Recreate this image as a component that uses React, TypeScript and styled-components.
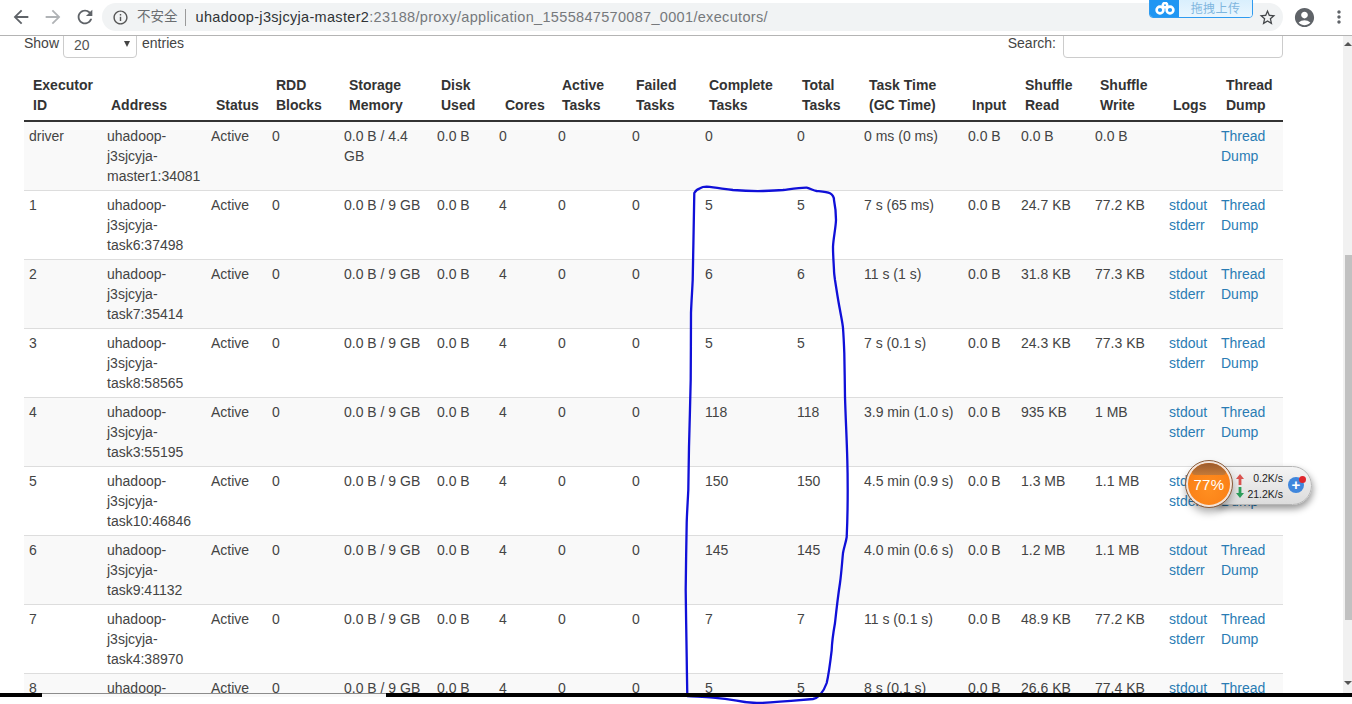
import React from "react";
import styled, { createGlobalStyle } from "styled-components";
import {
  MdArrowBack,
  MdArrowForward,
  MdRefresh,
  MdInfoOutline,
  MdStarBorder,
  MdAccountCircle,
  MdMoreVert,
} from "react-icons/md";

const Global = createGlobalStyle`
  html, body { margin: 0; padding: 0; height: 100%; background: #fff; overflow: hidden; }
  #root { height: 100%; }
  * { box-sizing: border-box; }
`;

const Page = styled.div`
  position: relative;
  width: 1352px;
  height: 704px;
  overflow: hidden;
  display: flex;
  flex-direction: column;
  font-family: "Liberation Sans", Arial, sans-serif;
  font-size: 14px;
  line-height: 20px;
  color: #333;
`;

const BrowserBar = styled.div`
  height: 36px;
  flex: none;
  display: flex;
  align-items: center;
  background: #fff;
  border-bottom: 1px solid #b4b4b4;
  padding: 0 0 1px 5px;
  position: relative;
  z-index: 2;
`;

const NavButton = styled.span<{ $dim?: boolean }>`
  width: 32px;
  display: flex;
  justify-content: center;
  color: ${(p) => (p.$dim ? "#b0b3b6" : "#5f6368")};
  font-size: 22px;
`;

const Omnibox = styled.div`
  margin-left: 1px;
  width: 1181px;
  height: 28px;
  border-radius: 14px;
  background: #f1f3f4;
  display: flex;
  align-items: center;
  padding-left: 10px;
  color: #5f6368;
`;

const InfoIcon = styled(MdInfoOutline)`
  font-size: 17px;
  flex: none;
  color: #555;
`;

const Insecure = styled.span`
  margin-left: 8px;
  font-family: "Liberation Sans", "Noto Sans CJK SC", sans-serif;
  font-size: 13.5px;
  color: #6a6d70;
`;

const Divider = styled.span`
  width: 1px;
  height: 17px;
  margin: 0 10px 0 7px;
  background: #9a9a9a;
`;

const UrlHost = styled.span`
  font-size: 14.5px;
  letter-spacing: 0.32px;
  color: #303336;
  white-space: nowrap;
`;

const UrlRest = styled(UrlHost)`
  color: #76797c;
`;

const Star = styled(MdStarBorder)`
  margin-left: auto;
  margin-right: 6px;
  font-size: 19px;
  color: #44474a;
`;

const RightIcons = styled.div`
  display: flex;
  align-items: center;
  margin-left: 10px;
  color: #5f6368;
`;

const AccountIcon = styled(MdAccountCircle)`
  font-size: 23px;
`;

const MoreIcon = styled(MdMoreVert)`
  font-size: 20px;
  margin-left: 13px;
`;

const UploadBadge = styled.div`
  position: absolute;
  left: 1149px;
  top: -1px;
  width: 104px;
  height: 19px;
  display: flex;
  border: 1px solid #2f9bf0;
  border-radius: 0 0 4px 4px;
  overflow: hidden;
`;

const UploadLogo = styled.div`
  width: 29px;
  background: #1f96f3;
  display: flex;
  align-items: center;
  justify-content: center;
`;

const UploadText = styled.div`
  flex: 1;
  background: linear-gradient(#d9effd, #eaf6fe);
  color: #7fb6de;
  font-family: "Noto Sans CJK SC", sans-serif;
  font-size: 12px;
  line-height: 15px;
  text-align: center;
  letter-spacing: 0.4px;
`;

const Main = styled.div`
  flex: 1;
  display: flex;
  min-height: 0;
  overflow: hidden;
`;

const Content = styled.div`
  width: 1343px;
  flex: none;
  padding-left: 24px;
  margin-top: -12px;
`;

const Controls = styled.div`
  width: 1259px;
  height: 34px;
  display: flex;
  justify-content: space-between;
  margin-bottom: 12px;
`;

const ControlLabel = styled.label<{ $gap: number }>`
  display: flex;
  align-items: flex-start;
  padding-top: 9px;
  gap: ${(p) => p.$gap}px;
  color: #444;
`;

const LengthSelect = styled.div`
  width: 74px;
  height: 34px;
  margin: -9px 1px 0 0;
  border: 1px solid #ccc;
  border-radius: 4px;
  background: #fff;
  padding: 10px 0 0 10px;
  color: #555;
  display: flex;
  justify-content: space-between;
`;

const SelectArrow = styled.span`
  width: 0;
  height: 0;
  margin: 6px 6px 0 0;
  border-left: 3.5px solid transparent;
  border-right: 3.5px solid transparent;
  border-top: 6px solid #444;
`;

const SearchInput = styled.input`
  width: 220px;
  height: 34px;
  margin-top: -9px;
  border: 1px solid #ccc;
  border-radius: 4px;
  background: #fff;
`;

const Table = styled.table`
  table-layout: fixed;
  width: 1259px;
  border-collapse: separate;
  border-spacing: 0;
`;

const Col = styled.col<{ $w: number }>`
  width: ${(p) => p.$w}px;
`;

const Head = styled.th<{ $pad: number }>`
  padding: 5px 0 5px ${(p) => p.$pad}px;
  height: 52px;
  text-align: left;
  vertical-align: bottom;
  font-weight: 700;
  color: #333;
  border-bottom: 2px solid #333;
`;

const Row = styled.tr<{ $striped: boolean }>`
  background: ${(p) => (p.$striped ? "#f9f9f9" : "#fff")};
`;

const Cell = styled.td<{ $first: boolean }>`
  padding: 4px 5px;
  vertical-align: top;
  overflow-wrap: break-word;
  color: #444;
  border-top: ${(p) => (p.$first ? "0" : "1px solid #ddd")};
`;

const Link = styled.a`
  color: #2a7cb4;
  text-decoration: none;
  display: block;
`;

const Scrollbar = styled.div`
  flex: 1;
  background: #f1f1f1;
  display: flex;
  flex-direction: column;
  align-items: flex-end;
  padding-top: 6px;
`;

const ScrollUp = styled.span`
  width: 0;
  height: 0;
  border-left: 4px solid transparent;
  border-right: 4px solid transparent;
  border-bottom: 4px solid #555;
`;

const ScrollDown = styled.span`
  width: 0;
  height: 0;
  margin-top: 61px;
  border-left: 4px solid transparent;
  border-right: 4px solid transparent;
  border-top: 4px solid #555;
`;

const ScrollThumb = styled.div`
  width: 7px;
  height: 365px;
  margin-top: 209px;
  background: #c1c1c1;
`;

const Ink = styled.svg`
  position: absolute;
  left: 0;
  top: 0;
  pointer-events: none;
  z-index: 3;
`;

const BottomStrip = styled.div`
  position: absolute;
  left: 0;
  right: 0;
  top: 693px;
  height: 4px;
  display: flex;
  align-items: flex-start;
  z-index: 4;
`;

const BlackBar = styled.div<{ $grow?: boolean }>`
  height: 4px;
  background: #000;
  ${(p) => (p.$grow ? "flex: 1;" : "width: 42px;")}
`;

const GreyLine = styled.div`
  width: 344px;
  height: 1px;
  background: #8c8c8c;
`;

const BottomBlank = styled.div`
  position: absolute;
  left: 0;
  right: 0;
  top: 697px;
  height: 7px;
  background: #fff;
  z-index: 2;
`;

const Widget = styled.div`
  position: absolute;
  left: 1184px;
  top: 461px;
  width: 128px;
  height: 48px;
  z-index: 5;
`;

const WidgetPill = styled.div`
  position: absolute;
  left: 32px;
  top: 5px;
  width: 96px;
  height: 39px;
  border-radius: 0 20px 20px 0;
  border: 1px solid #b5b5b5;
  background: linear-gradient(#f4f4f4, #dcdcdc);
  box-shadow: 1px 4px 7px rgba(0, 0, 0, 0.4);
`;

const WidgetBall = styled.div`
  position: absolute;
  left: 2px;
  top: 0;
  width: 46px;
  height: 46px;
  border-radius: 50%;
  border: 2px solid #f3e4da;
  outline: 1px solid #8a5a38;
  background: radial-gradient(circle at 50% 62%, #ff8f20 0, #fb8218 60%, #ee7410 100%);
  box-shadow: 0 5px 8px rgba(0, 0, 0, 0.35);
  color: #fff;
  font-size: 15px;
  line-height: 44px;
  text-align: center;
  letter-spacing: 0.4px;
  overflow: hidden;
`;

const BallCap = styled.div`
  position: absolute;
  left: 4px;
  right: 4px;
  top: 0;
  height: 12px;
  border-radius: 18px 18px 6px 6px;
  background: linear-gradient(#9c5a2c, #c47a38);
`;

const Speed = styled.div<{ $top: number }>`
  position: absolute;
  right: 29px;
  top: ${(p) => p.$top}px;
  width: 44px;
  text-align: right;
  font-size: 10.5px;
  line-height: 12px;
  color: #222;
`;

const SpeedArrow = styled.svg<{ $top: number }>`
  position: absolute;
  left: 52px;
  top: ${(p) => p.$top}px;
`;

const PlusBall = styled.div`
  position: absolute;
  left: 104px;
  top: 16px;
  width: 16px;
  height: 16px;
  border-radius: 50%;
  background: #3f86dc;
  color: #fff;
  font-size: 15px;
  font-weight: 700;
  line-height: 16px;
  text-align: center;
`;

const RedDot = styled.div`
  position: absolute;
  left: 115px;
  top: 15px;
  width: 7px;
  height: 7px;
  border-radius: 50%;
  background: #e0262c;
`;

const cols = [78, 104, 61, 72, 93, 62, 59, 74, 73, 92, 67, 104, 53, 74, 74, 52, 67];

const heads: [string[], number][] = [
  [["Executor", "ID"], 9],
  [["Address"], 9],
  [["Status"], 10],
  [["RDD", "Blocks"], 9],
  [["Storage", "Memory"], 10],
  [["Disk", "Used"], 9],
  [["Cores"], 11],
  [["Active", "Tasks"], 9],
  [["Failed", "Tasks"], 9],
  [["Complete", "Tasks"], 9],
  [["Total", "Tasks"], 10],
  [["Task Time", "(GC Time)"], 10],
  [["Input"], 9],
  [["Shuffle", "Read"], 9],
  [["Shuffle", "Write"], 10],
  [["Logs"], 9],
  [["Thread", "Dump"], 10],
];

interface Executor {
  id: string;
  addr: string;
  storage: string;
  cores: string;
  complete: string;
  total: string;
  time: string;
  read: string;
  write: string;
}

const mk = (
  id: string,
  addr: string,
  storage: string,
  cores: string,
  complete: string,
  time: string,
  read: string,
  write: string
): Executor => ({ id, addr, storage, cores, complete, total: complete, time, read, write });

const rows: Executor[] = [
  mk("driver", "master1:34081", "0.0 B / 4.4 GB", "0", "0", "0 ms (0 ms)", "0.0 B", "0.0 B"),
  mk("1", "task6:37498", "0.0 B / 9 GB", "4", "5", "7 s (65 ms)", "24.7 KB", "77.2 KB"),
  mk("2", "task7:35414", "0.0 B / 9 GB", "4", "6", "11 s (1 s)", "31.8 KB", "77.3 KB"),
  mk("3", "task8:58565", "0.0 B / 9 GB", "4", "5", "7 s (0.1 s)", "24.3 KB", "77.3 KB"),
  mk("4", "task3:55195", "0.0 B / 9 GB", "4", "118", "3.9 min (1.0 s)", "935 KB", "1 MB"),
  mk("5", "task10:46846", "0.0 B / 9 GB", "4", "150", "4.5 min (0.9 s)", "1.3 MB", "1.1 MB"),
  mk("6", "task9:41132", "0.0 B / 9 GB", "4", "145", "4.0 min (0.6 s)", "1.2 MB", "1.1 MB"),
  mk("7", "task4:38970", "0.0 B / 9 GB", "4", "7", "11 s (0.1 s)", "48.9 KB", "77.2 KB"),
  mk("8", "task5:40210", "0.0 B / 9 GB", "4", "5", "8 s (0.1 s)", "26.6 KB", "77.4 KB"),
];

const inkPath =
  "M694.3 193 C696 190 698 188.8 700 188.3 C702 187 704 186.7 706.7 186.7 C716 187.5 724 189 733 190 C743 190.8 753 191.2 763 191 C770 190.8 776 190.6 783 190 C791 189 799 187.6 806.7 187.7 C811 188.6 813 190.4 816.7 191 C822 191.6 827 192 830 193.3 C833 195 834 197 834 200 C835.4 207 836 213 836 220 C835.6 229 833.4 238 833 246.7 C833 255 833.6 262 834 270 C834 273 834.6 277 835 280 C836.6 290 838 300 840 310 C841 316 842.4 322 843 328 C843.6 336 844 345 844.3 353 C844.6 368 844.8 382 845 397 C845.6 418 846.8 439 847.3 460 C847.6 470 847.7 480 847.7 490 C847.7 505 847.4 522 846.7 537 C845.8 543 844 547 843 553 C842 563 841.4 573 840 583 C838 596 836.4 610 835 623 C833.4 632 832 641 831.7 650 C830.4 661 829 673 826.7 683 C825 688 822.6 692 820 695 C818 697 815.6 698.6 813 699 C802 700 791 700.8 780 701.7 C772 702.4 764 703 756.7 703 C750 702.8 743 702 736.7 700.7 C729 699.4 721 698.4 713 697.7 C704 697 696 696.6 687.3 696 C687 683 686.9 670 686.7 657 C686.3 635 686 612 685.7 590 C685.9 568 686.3 545 686.7 523 C687 512 687.8 501 688.3 490 C688.6 475 688.8 461 689 447 C689.6 425 690.2 402 690.7 380 C690.9 358 690.9 335 691 313 C691.4 302 692.2 291 692.7 280 C693.2 251 693.9 222 694.3 193 Z";

export default function App() {
  return (
    <Page>
      <Global />
      <BrowserBar>
        <NavButton><MdArrowBack /></NavButton>
        <NavButton $dim><MdArrowForward /></NavButton>
        <NavButton><MdRefresh /></NavButton>
        <Omnibox>
          <InfoIcon />
          <Insecure>不安全</Insecure>
          <Divider />
          <UrlHost>uhadoop-j3sjcyja-master2</UrlHost>
          <UrlRest>:23188/proxy/application_1555847570087_0001/executors/</UrlRest>
          <Star />
        </Omnibox>
        <RightIcons>
          <AccountIcon />
          <MoreIcon />
        </RightIcons>
        <UploadBadge>
          <UploadLogo>
            <svg width="20" height="13" viewBox="0 0 20 13" fill="none" stroke="#fff" strokeWidth="2.6">
              <circle cx="5" cy="8" r="3.4" />
              <circle cx="15" cy="8" r="3.4" />
              <circle cx="10" cy="3.2" r="2.2" />
            </svg>
          </UploadLogo>
          <UploadText>拖拽上传</UploadText>
        </UploadBadge>
      </BrowserBar>
      <Main>
        <Content>
          <Controls>
            <ControlLabel $gap={4}>
              Show
              <LengthSelect>
                20
                <SelectArrow />
              </LengthSelect>
              entries
            </ControlLabel>
            <ControlLabel $gap={7}>
              Search:
              <SearchInput type="text" />
            </ControlLabel>
          </Controls>
          <Table>
            <colgroup>
              {cols.map((w, i) => (
                <Col key={i} $w={w} />
              ))}
            </colgroup>
            <thead>
              <tr>
                {heads.map(([lines, pad], i) => (
                  <Head key={i} $pad={pad}>
                    {lines.map((l, j) => (
                      <React.Fragment key={j}>
                        {j > 0 && <br />}
                        {l}
                      </React.Fragment>
                    ))}
                  </Head>
                ))}
              </tr>
            </thead>
            <tbody>
              {rows.map((r, i) => {
                const first = i === 0;
                return (
                  <Row key={r.id} $striped={i % 2 === 0}>
                    <Cell $first={first}>{r.id}</Cell>
                    <Cell $first={first}>
                      uhadoop-<br />j3sjcyja-<br />{r.addr}
                    </Cell>
                    <Cell $first={first}>Active</Cell>
                    <Cell $first={first}>0</Cell>
                    <Cell $first={first}>{r.storage}</Cell>
                    <Cell $first={first}>0.0 B</Cell>
                    <Cell $first={first}>{r.cores}</Cell>
                    <Cell $first={first}>0</Cell>
                    <Cell $first={first}>0</Cell>
                    <Cell $first={first}>{r.complete}</Cell>
                    <Cell $first={first}>{r.total}</Cell>
                    <Cell $first={first}>{r.time}</Cell>
                    <Cell $first={first}>0.0 B</Cell>
                    <Cell $first={first}>{r.read}</Cell>
                    <Cell $first={first}>{r.write}</Cell>
                    <Cell $first={first}>
                      {!first && (
                        <>
                          <Link>stdout</Link>
                          <Link>stderr</Link>
                        </>
                      )}
                    </Cell>
                    <Cell $first={first}>
                      <Link>Thread<br />Dump</Link>
                    </Cell>
                  </Row>
                );
              })}
            </tbody>
          </Table>
        </Content>
        <Scrollbar>
          <ScrollUp />
          <ScrollThumb />
          <ScrollDown />
        </Scrollbar>
      </Main>
      <BottomBlank />
      <Ink width="1352" height="704" viewBox="0 0 1352 704" fill="none">
        <path d={inkPath} stroke="#1010d8" strokeWidth="2.3" strokeLinejoin="round" />
      </Ink>
      <BottomStrip>
        <BlackBar />
        <GreyLine />
        <BlackBar $grow />
      </BottomStrip>
      <Widget>
        <WidgetPill />
        <SpeedArrow $top={13} width="8" height="11" viewBox="0 0 8 11">
          <path d="M4 0 L8 5 H5.4 V11 H2.6 V5 H0 Z" fill="#d9534f" />
        </SpeedArrow>
        <SpeedArrow $top={26} width="8" height="11" viewBox="0 0 8 11">
          <path d="M4 11 L8 6 H5.4 V0 H2.6 V6 H0 Z" fill="#2e9e5b" />
        </SpeedArrow>
        <Speed $top={11}>0.2K/s</Speed>
        <Speed $top={27}>21.2K/s</Speed>
        <PlusBall>+</PlusBall>
        <RedDot />
        <WidgetBall>
          <BallCap />
          77%
        </WidgetBall>
      </Widget>
    </Page>
  );
}
